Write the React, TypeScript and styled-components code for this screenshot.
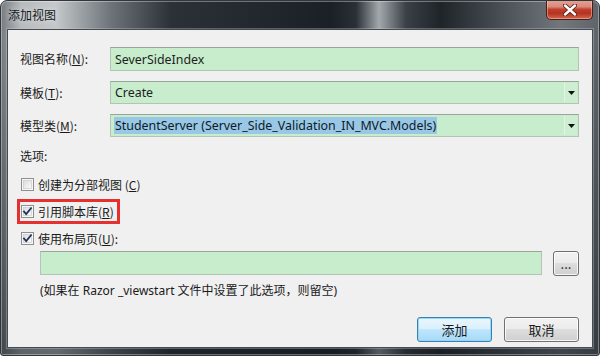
import styled, { createGlobalStyle } from "styled-components";

const GlobalStyle = createGlobalStyle`
  html, body {
    margin: 0;
    padding: 0;
    background: #ffffff;
  }
  body {
    font-family: "Noto Sans", "Noto Sans CJK SC", sans-serif;
    font-size: 12px;
  }
`;

const Window = styled.div`
  position: relative;
  width: 600px;
  height: 356px;
  box-sizing: border-box;
  display: flex;
  flex-direction: column;
  border-radius: 7px 7px 3px 3px;
  border: 1px solid #30363c;
  box-shadow: inset 0 0 0 1px rgba(255, 255, 255, 0.35);
  background:
    linear-gradient(
      to bottom,
      rgba(0, 0, 0, 0) 0,
      rgba(0, 0, 0, 0) 40px,
      rgba(20, 26, 32, 0.55) 100%
    ),
    linear-gradient(
      90deg,
      #767b80 0,
      #b7bbbe 20px,
      #c4c8ca 55px,
      #6d7379 110px,
      #2b3137 170px,
      #1b2026 330px,
      #2a3036 355px,
      #a3a8ac 378px,
      #3a4046 405px,
      #1f2429 440px,
      #50565c 510px,
      #72777c 560px,
      #5d6368 600px
    );
  overflow: hidden;
`;

const TitleBar = styled.div`
  height: 28px;
  display: flex;
  align-items: flex-start;
  justify-content: space-between;
  padding-left: 7px;
  padding-right: 6px;
`;

const Title = styled.span`
  margin-top: 6px;
  font-family: "Noto Sans CJK SC", sans-serif;
  font-size: 12px;
  line-height: 16px;
  color: #151a1f;
  text-shadow: 0 0 6px rgba(255, 255, 255, 0.7);
`;

const CloseButton = styled.div`
  width: 47px;
  height: 20px;
  box-sizing: border-box;
  margin-top: -1px;
  display: flex;
  align-items: center;
  justify-content: center;
  border: 1px solid #4b1d17;
  border-top: none;
  border-radius: 0 0 5px 5px;
  background: linear-gradient(
    to bottom,
    #e3a597 0,
    #d98a7a 35%,
    #c0402d 50%,
    #b5321f 70%,
    #d1684f 100%
  );
  box-shadow: inset 0 0 0 1px rgba(255, 210, 200, 0.45);
`;

const Client = styled.div`
  flex: 1;
  margin: 0 6px 7px 6px;
  background: #f0f0f0;
  border: 1px solid #454b52;
  box-shadow: 0 0 0 1px rgba(200, 205, 210, 0.35);
  display: flex;
  flex-direction: column;
  padding: 17px 13px 0 11px;
  font-family: "Noto Sans", "Noto Sans CJK SC", sans-serif;
  color: #1a1a1a;
`;

const Form = styled.div`
  display: grid;
  grid-template-columns: 91px 1fr;
  row-gap: 10px;
  align-items: center;
`;

const Label = styled.span`
  padding-left: 1px;
  line-height: 16px;
  font-family: "Noto Sans CJK SC", sans-serif;
  white-space: nowrap;
`;

const Field = styled.div<{ $h?: number }>`
  height: ${({ $h }) => $h ?? 23}px;
  box-sizing: border-box;
  display: flex;
  align-items: center;
  background: #c7edcc;
  border: 1px solid #b3c4b6;
  border-top-color: #9aa39c;
  padding-left: 4px;
  font-size: 12.4px;
  color: #1e1e1e;
`;

const FieldText = styled.span<{ $selected?: boolean }>`
  flex: 1;
  line-height: 17px;
  white-space: nowrap;
  overflow: hidden;
  ${({ $selected }) =>
    $selected &&
    `
    flex: 0 0 auto;
    margin-left: -1px;
    padding: 0 1px;
    background: #99c8e6;
    color: #0e1a26;
  `}
`;

const Spacer = styled.div`
  flex: 1;
`;

const DropCell = styled.div`
  width: 12px;
  height: 19px;
  margin-right: 1px;
  display: flex;
  align-items: center;
  justify-content: center;
  border-left: 1px solid #e2f5e5;
  background: #cdeed1;
`;

const Section = styled.div`
  margin-top: 11px;
  line-height: 16px;
  padding-left: 1px;
  font-family: "Noto Sans CJK SC", sans-serif;
`;

const CheckList = styled.div`
  margin-top: 12px;
  display: flex;
  flex-direction: column;
  gap: 11px;
`;

const CheckRow = styled.div`
  position: relative;
  display: flex;
  align-items: center;
  gap: 4px;
  height: 16px;
  padding-left: 2px;
  font-family: "Noto Sans CJK SC", sans-serif;
  font-size: 12px;
  white-space: nowrap;
`;

const Highlight = styled.div`
  position: absolute;
  left: -2px;
  top: -4px;
  width: 97px;
  height: 19px;
  border: 3px solid #e5302f;
`;

const LayoutRow = styled.div`
  margin-top: 5px;
  margin-left: 21px;
  display: flex;
  gap: 11px;
`;

const Note = styled.div`
  margin-top: 7px;
  margin-left: 21px;
  line-height: 16px;
  white-space: nowrap;
`;

const Footer = styled.div`
  margin-top: 18px;
  display: flex;
  justify-content: flex-end;
  gap: 12px;
`;

const Button = styled.button<{ $primary?: boolean; $w?: number }>`
  width: ${({ $w }) => $w ?? 75}px;
  height: 25px;
  box-sizing: border-box;
  padding: 0;
  border-radius: 3px;
  font-family: "Noto Sans CJK SC", sans-serif;
  font-size: 13px;
  color: #1a1a1a;
  border: 1px solid ${({ $primary }) => ($primary ? "#3c7fb1" : "#707070")};
  background: ${({ $primary }) =>
    $primary
      ? "linear-gradient(to bottom, #eaf6fd 0, #d9f0fc 50%, #bee6fd 50%, #a7d9f5 100%)"
      : "linear-gradient(to bottom, #f2f2f2 0, #ebebeb 50%, #dddddd 50%, #cfcfcf 100%)"};
  box-shadow: inset 0 0 0 1px
    ${({ $primary }) => ($primary ? "rgba(140, 215, 245, 0.9)" : "rgba(255, 255, 255, 0.8)")};
`;

const Arrow = () => (
  <svg width="7" height="4" viewBox="0 0 7 4">
    <path d="M0 0 H7 L3.5 4 Z" fill="#111" />
  </svg>
);

const Check = ({ checked }: { checked?: boolean }) => (
  <svg width="13" height="13" viewBox="0 0 13 13">
    <defs>
      <linearGradient id="cb" x1="0" y1="0" x2="1" y2="1">
        <stop offset="0" stopColor="#dcdcdc" />
        <stop offset="1" stopColor="#fbfbfb" />
      </linearGradient>
    </defs>
    <rect x="0.5" y="0.5" width="12" height="12" fill="#f6f6f6" stroke="#8e8f8f" />
    <rect x="2.5" y="2.5" width="8" height="8" fill="url(#cb)" stroke="#c4c4c4" strokeWidth="0.6" />
    {checked && (
      <path
        d="M3 6.5 L5.2 9 L10 3.2"
        fill="none"
        stroke="#22315c"
        strokeWidth="1.8"
        strokeLinecap="square"
      />
    )}
  </svg>
);

const CloseGlyph = () => (
  <svg width="14" height="12" viewBox="0 0 14 12">
    <path d="M2 1.5 L12 10.5 M12 1.5 L2 10.5" stroke="#5a2018" strokeWidth="4.2" strokeLinecap="round" />
    <path d="M2 1.5 L12 10.5 M12 1.5 L2 10.5" stroke="#ffffff" strokeWidth="2.4" strokeLinecap="round" />
  </svg>
);

export default function App() {
  return (
    <>
      <GlobalStyle />
      <Window>
        <TitleBar>
          <Title>添加视图</Title>
          <CloseButton>
            <CloseGlyph />
          </CloseButton>
        </TitleBar>
        <Client>
          <Form>
            <Label>
              视图名称(<u>N</u>):
            </Label>
            <Field $h={24}>
              <FieldText>SeverSideIndex</FieldText>
            </Field>
            <Label>
              模板(<u>T</u>):
            </Label>
            <Field>
              <FieldText>Create</FieldText>
              <DropCell>
                <Arrow />
              </DropCell>
            </Field>
            <Label>
              模型类(<u>M</u>):
            </Label>
            <Field>
              <FieldText $selected>StudentServer (Server_Side_Validation_IN_MVC.Models)</FieldText>
              <Spacer />
              <DropCell>
                <Arrow />
              </DropCell>
            </Field>
          </Form>
          <Section>选项:</Section>
          <CheckList>
            <CheckRow>
              <Check />
              <span>
                创建为分部视图 (<u>C</u>)
              </span>
            </CheckRow>
            <CheckRow>
              <Check checked />
              <span>
                引用脚本库(<u>R</u>)
              </span>
              <Highlight />
            </CheckRow>
            <CheckRow>
              <Check checked />
              <span>
                使用布局页(<u>U</u>):
              </span>
            </CheckRow>
          </CheckList>
          <LayoutRow>
            <Field $h={24} style={{ flex: 1 }} />
            <Button $w={26}>...</Button>
          </LayoutRow>
          <Note>(如果在 Razor _viewstart 文件中设置了此选项，则留空)</Note>
          <Footer>
            <Button $primary>添加</Button>
            <Button>取消</Button>
          </Footer>
        </Client>
      </Window>
    </>
  );
}
